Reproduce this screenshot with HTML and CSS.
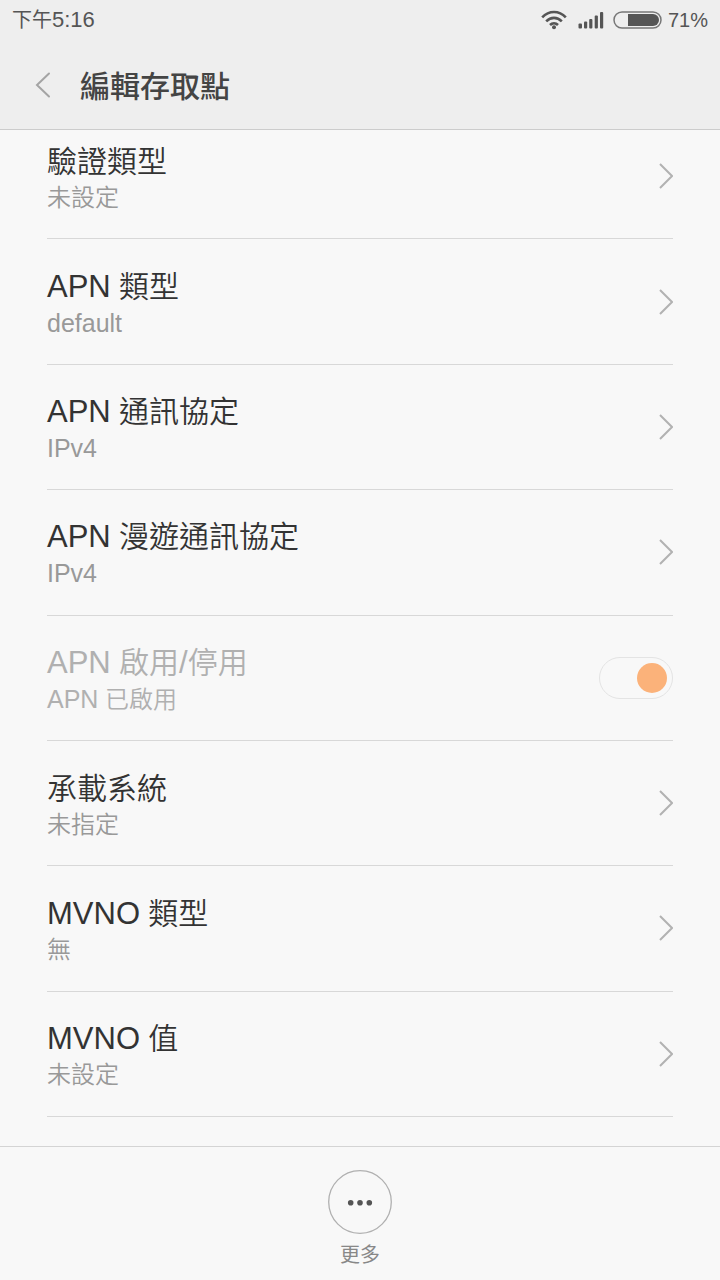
FILE: index.html
```html
<!DOCTYPE html>
<html lang="zh-Hant">
<head>
<meta charset="UTF-8">
<meta name="viewport" content="width=device-width, initial-scale=1.0">
<title>編輯存取點</title>
<link rel="stylesheet" href="styles.css">
</head>
<body>
<header class="top">
  <div class="status">
    <span class="time">下午<span class="latin">5:16</span></span>
    <div class="indicators">
      <svg class="wifi" width="26" height="20" viewBox="0 0 26 20" fill="none" stroke="#555" stroke-width="2.6">
        <path d="M1.2 7.4C8 .2 18 .2 24.800 7.400"/>
        <path d="M5.200 11.300C9.800 6.700 16.200 6.700 20.800 11.300"/>
        <path d="M9 15C11.300 12.700 14.700 12.700 17 15"/>
        <circle cx="13" cy="17.200" r="2" fill="#555" stroke="none"/>
      </svg>
      <svg class="signal" width="26" height="18" viewBox="0 0 26 18" fill="#555">
        <rect x="0.500" y="12.500" width="3.500" height="5" rx="1"/>
        <rect x="6" y="10.500" width="3.200" height="7" rx="1"/>
        <rect x="11.200" y="8" width="3.200" height="9.500" rx="1"/>
        <rect x="16.700" y="4.500" width="3.200" height="13" rx="1"/>
        <rect x="22" y="1" width="3.200" height="16.500" rx="1"/>
      </svg>
      <svg class="battery" width="49" height="18" viewBox="0 0 49 18">
        <rect x="1" y="1" width="47" height="16" rx="8" fill="none" stroke="#777" stroke-width="1.500"/>
        <path d="M15 3h25a6 6 0 0 1 0 12H15z" fill="#555"/>
      </svg>
      <span class="latin">71%</span>
    </div>
  </div>
  <div class="title-bar">
    <button class="back" aria-label="返回">
      <svg width="16" height="26" viewBox="0 0 16 26" fill="none" stroke="#a4a4a4" stroke-width="2" stroke-linecap="round"><path d="M14 1.500L2 13l12 11.500"/></svg>
    </button>
    <h1>編輯存取點</h1>
  </div>
</header>

<main class="content">
  <div class="list">
    <button class="row">
      <span class="text"><span class="name">驗證類型</span><span class="value">未設定</span></span>
      <svg class="arrow" viewBox="0 0 16 28"><path d="M3 2l12 12L3 26"/></svg>
    </button>
    <button class="row">
      <span class="text"><span class="name"><span class="latin">APN</span> 類型</span><span class="value"><span class="latin">default</span></span></span>
      <svg class="arrow" viewBox="0 0 16 28"><path d="M3 2l12 12L3 26"/></svg>
    </button>
    <button class="row">
      <span class="text"><span class="name"><span class="latin">APN</span> 通訊協定</span><span class="value"><span class="latin">IPv4</span></span></span>
      <svg class="arrow" viewBox="0 0 16 28"><path d="M3 2l12 12L3 26"/></svg>
    </button>
    <button class="row">
      <span class="text"><span class="name"><span class="latin">APN</span> 漫遊通訊協定</span><span class="value"><span class="latin">IPv4</span></span></span>
      <svg class="arrow" viewBox="0 0 16 28"><path d="M3 2l12 12L3 26"/></svg>
    </button>
    <label class="row disabled">
      <span class="text"><span class="name"><span class="latin">APN</span> 啟用<span class="latin">/</span>停用</span><span class="value"><span class="latin">APN</span> 已啟用</span></span>
      <input class="switch" type="checkbox" checked disabled>
    </label>
    <button class="row">
      <span class="text"><span class="name">承載系統</span><span class="value">未指定</span></span>
      <svg class="arrow" viewBox="0 0 16 28"><path d="M3 2l12 12L3 26"/></svg>
    </button>
    <button class="row">
      <span class="text"><span class="name"><span class="latin">MVNO</span> 類型</span><span class="value">無</span></span>
      <svg class="arrow" viewBox="0 0 16 28"><path d="M3 2l12 12L3 26"/></svg>
    </button>
    <button class="row">
      <span class="text"><span class="name"><span class="latin">MVNO</span> 值</span><span class="value">未設定</span></span>
      <svg class="arrow" viewBox="0 0 16 28"><path d="M3 2l12 12L3 26"/></svg>
    </button>
  </div>
</main>

<footer class="bottom">
  <button class="more">
    <svg width="64" height="64" viewBox="0 0 64 64">
      <circle cx="32" cy="32" r="31.300" fill="none" stroke="#b0b0b0" stroke-width="1.300"/>
      <g fill="#555"><circle cx="22.700" cy="32.700" r="2.800"/><circle cx="32" cy="32.700" r="2.800"/><circle cx="41.300" cy="32.700" r="2.800"/></g>
    </svg>
    <span>更多</span>
  </button>
</footer>
</body>
</html>
```
FILE: styles.css
```css
* {
  box-sizing: border-box;
}
body {
  margin: 0;
  height: 100vh;
  display: flex;
  flex-direction: column;
  background: #f8f8f8;
  color: #333;
  font-family: "Liberation Sans", "Noto Sans CJK TC", sans-serif;
}
button {
  padding: 0;
  border: none;
  background: none;
  color: inherit;
  font: inherit;
  text-align: left;
  cursor: pointer;
}
svg {
  display: block;
  flex: none;
}

/* status bar and title */
.top {
  background: #eee;
  border-bottom: 1px solid #ccc;
}
.status {
  display: flex;
  justify-content: space-between;
  align-items: center;
  height: 40px;
  padding: 0 12px;
  font-size: 20px;
  line-height: 40px;
  color: #555;
}
.status .latin {
  font-size: 22px;
}
.indicators {
  display: flex;
  align-items: center;
}
.indicators .latin {
  font-size: 20px;
}
.signal {
  margin-left: 11px;
}
.battery {
  margin: 0 6px 0 9px;
}
.title-bar {
  display: flex;
  align-items: center;
  gap: 29px;
  height: 89px;
  padding: 0 35px;
}
.title-bar h1 {
  margin: 0;
  padding-top: 4px;
  font-size: 30px;
  font-weight: 500;
  line-height: 40px;
  color: #444;
}

/* settings list, scrolled a little under the title */
.content {
  flex: 1;
  min-height: 0;
  display: flex;
  overflow: hidden;
  padding: 0 47px 29px;
}
.list {
  flex: 1;
  display: grid;
  grid-auto-rows: 1fr;
  margin-top: -16px;
}
.row {
  display: flex;
  justify-content: space-between;
  align-items: center;
  border-bottom: 1px solid #d8d8d8;
}
.text {
  display: flex;
  flex-direction: column;
  padding-top: 3px;
}
.name {
  font-size: 30px;
  font-weight: 350;
  line-height: 40px;
}
.name .latin {
  font-size: 31px;
}
.value {
  font-size: 24px;
  font-weight: 350;
  line-height: 32px;
  color: #999;
}
.value .latin {
  font-size: 25px;
}
.arrow {
  width: 16px;
  height: 28px;
  fill: none;
  stroke: #b2b2b2;
  stroke-width: 2;
}
.disabled .name,
.disabled .value {
  color: #b0b0b0;
}
.switch {
  appearance: none;
  display: flex;
  justify-content: flex-end;
  align-items: center;
  width: 74px;
  height: 42px;
  margin: 0;
  padding: 0 5px;
  border: 1px solid #e4e4e4;
  border-radius: 21px;
}
.switch::before {
  content: "";
  width: 30px;
  height: 30px;
  border-radius: 50%;
  background: #fbb27a;
}
.switch:not(:checked) {
  justify-content: flex-start;
}
.switch:not(:checked)::before {
  background: #ccc;
}

/* bottom action bar */
.bottom {
  display: flex;
  justify-content: center;
  height: 134px;
  padding-top: 23px;
  border-top: 1px solid #d4d4d4;
}
.more {
  display: flex;
  flex-direction: column;
  align-items: center;
  gap: 7px;
  height: 100px;
  font-size: 20px;
  line-height: 28px;
  color: #888;
}
```
